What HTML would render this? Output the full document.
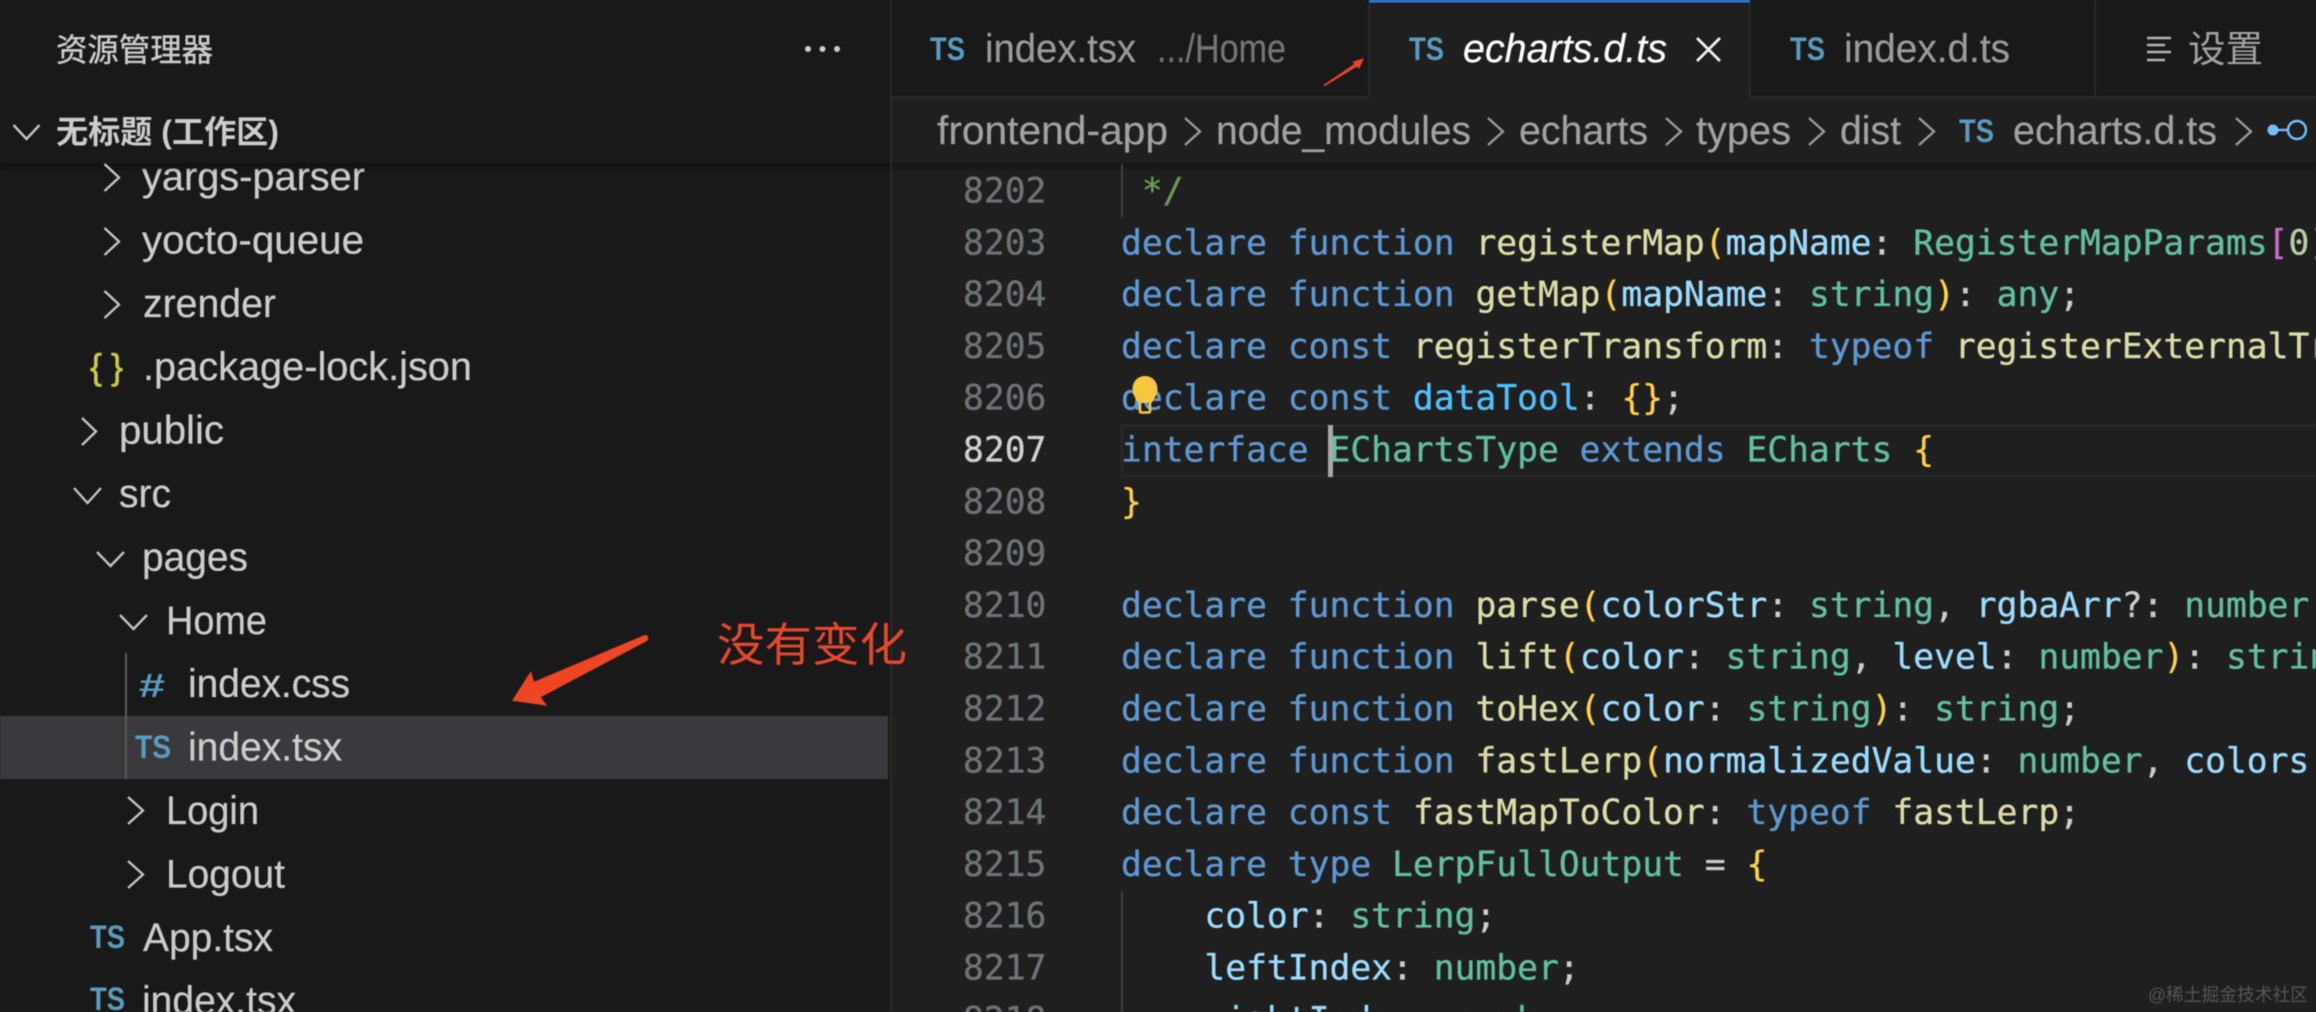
<!DOCTYPE html>
<html lang="zh-CN">
<head>
<meta charset="utf-8">
<title>echarts.d.ts</title>
<style>
html,body{margin:0;padding:0;background:#1f1f1f;width:2316px;height:1012px;overflow:hidden}
svg{display:block;filter:blur(.5px)}
text{white-space:pre}
.s{font:39.5px "Liberation Sans","Noto Sans CJK SC",sans-serif;fill:#cccccc;stroke:#cccccc;stroke-width:.25}
.ts{font:bold 32px "Liberation Sans",sans-serif;fill:#5b9bbd}
.tab{font:39.5px "Liberation Sans",sans-serif;fill:#9b9b9b;stroke:#9b9b9b;stroke-width:.2}
.bc{font:39.5px "Liberation Sans",sans-serif;fill:#a2a2a2;stroke:#a2a2a2;stroke-width:.2}
.c{font:34.63px "DejaVu Sans Mono",monospace;fill:#cccccc;stroke:#cccccc;stroke-width:.35}
.n{font:34.63px "DejaVu Sans Mono",monospace;fill:#6e7378;stroke:#6e7378;stroke-width:.35}
.k{fill:#5f98d2;stroke:#5f98d2}.f{fill:#dcdcaa;stroke:#dcdcaa}.v{fill:#9cdcfe;stroke:#9cdcfe}.t{fill:#63bfa3;stroke:#63bfa3}.y{fill:#ffd23f;stroke:#ffd23f}.p{fill:#c76fc9;stroke:#c76fc9}.m{fill:#b5cea8;stroke:#b5cea8}.g{fill:#6a9955;stroke:#6a9955}.d{fill:#4fc1ff;stroke:#4fc1ff}
.ch{fill:none;stroke:#c4c4c4;stroke-width:2.4}
.bch{fill:none;stroke:#9a9a9a;stroke-width:2.4}
</style>
</head>
<body>
<svg xmlns="http://www.w3.org/2000/svg" width="2316" height="1012" viewBox="0 0 2316 1012">
<defs>
<linearGradient id="sh" x1="0" y1="0" x2="0" y2="1"><stop offset="0" stop-color="#000" stop-opacity=".38"/><stop offset="1" stop-color="#000" stop-opacity="0"/></linearGradient>
</defs>

<!-- backgrounds -->
<rect x="0" y="0" width="2316" height="1012" fill="#1f1f1f"/>
<rect x="0" y="0" width="890" height="1012" fill="#19191a"/>
<rect x="890" y="0" width="2" height="1012" fill="#2a2a2a"/>
<rect x="892" y="0" width="1424" height="97" fill="#19191a"/>
<rect x="892" y="96" width="1424" height="3" fill="#292929"/>
<rect x="1369" y="0" width="381" height="99" fill="#1f1f1f"/>
<rect x="1369" y="0" width="381" height="2.500" fill="#2f7fd6"/>
<rect x="1368" y="3" width="2" height="93" fill="#2a2a2a"/>
<rect x="1749" y="3" width="2" height="93" fill="#2a2a2a"/>
<rect x="2094" y="0" width="2" height="97" fill="#2a2a2a"/>

<!-- sidebar -->
<rect x="0" y="716" width="888" height="63" fill="#3a3a3e"/>
<rect x="125" y="653" width="2" height="126" fill="#5a5a5a"/>

<g>
<text x="142" y="190" class="s" textLength="223" lengthAdjust="spacingAndGlyphs">yargs-parser</text>
<text x="142" y="253.4" class="s" textLength="222" lengthAdjust="spacingAndGlyphs">yocto-queue</text>
<text x="143" y="316.8" class="s" textLength="133" lengthAdjust="spacingAndGlyphs">zrender</text>
<text x="143" y="380.2" class="s" textLength="329" lengthAdjust="spacingAndGlyphs">.package-lock.json</text>
<text x="119" y="443.6" class="s" textLength="105" lengthAdjust="spacingAndGlyphs">public</text>
<text x="119" y="507" class="s" textLength="52" lengthAdjust="spacingAndGlyphs">src</text>
<text x="142" y="570.4" class="s" textLength="106" lengthAdjust="spacingAndGlyphs">pages</text>
<text x="166" y="633.8" class="s" textLength="101" lengthAdjust="spacingAndGlyphs">Home</text>
<text x="188" y="697.2" class="s" textLength="162" lengthAdjust="spacingAndGlyphs">index.css</text>
<text x="188" y="760.6" class="s" textLength="154" lengthAdjust="spacingAndGlyphs">index.tsx</text>
<text x="166" y="824" class="s" textLength="93" lengthAdjust="spacingAndGlyphs">Login</text>
<text x="166" y="887.4" class="s" textLength="119" lengthAdjust="spacingAndGlyphs">Logout</text>
<text x="143" y="950.8" class="s" textLength="130" lengthAdjust="spacingAndGlyphs">App.tsx</text>
<text x="142" y="1014.2" class="s" textLength="154" lengthAdjust="spacingAndGlyphs">index.tsx</text>
</g>

<!-- sticky workspace header -->
<rect x="0" y="0" width="890" height="163" fill="#19191a"/>
<rect x="0" y="163" width="890" height="10" fill="url(#sh)"/>
<text x="56" y="61" textLength="157" lengthAdjust="spacingAndGlyphs" style="font:32px 'Liberation Sans','Noto Sans CJK SC',sans-serif;fill:#cccccc;stroke:#cccccc;stroke-width:.4">资源管理器</text>
<circle cx="808" cy="49" r="3" fill="#cccccc"/><circle cx="822.500" cy="49" r="3" fill="#cccccc"/><circle cx="837" cy="49" r="3" fill="#cccccc"/>
<text x="56" y="143" textLength="223" lengthAdjust="spacingAndGlyphs" style="font:bold 32px 'Liberation Sans','Noto Sans CJK SC',sans-serif;fill:#cccccc">无标题 (工作区)</text>
<path class="ch" d="M13.500 125 L26.500 139 L39.500 125"/>

<!-- tree chevrons -->
<path class="ch" d="M104.500 164 L119 177.500 L104.500 191"/>
<path class="ch" d="M104.500 228 L119 241.500 L104.500 255"/>
<path class="ch" d="M104.500 291 L119 304.500 L104.500 318"/>
<path class="ch" d="M82 418 L96 431.500 L82 445"/>
<path class="ch" d="M74 488 L87.500 503 L101 488"/>
<path class="ch" d="M97 552 L110.500 566 L124 552"/>
<path class="ch" d="M120 615 L133.500 629 L147 615"/>
<path class="ch" d="M128 797 L143 810.500 L128 824"/>
<path class="ch" d="M128 861 L143 874.500 L128 888"/>

<!-- file icons -->
<text x="90" y="379" textLength="33" lengthAdjust="spacing" style="font:36px 'Liberation Sans',sans-serif;fill:#cbcb41;stroke:#cbcb41;stroke-width:.6">{}</text>
<text x="139" y="697" textLength="26" lengthAdjust="spacingAndGlyphs" style="font:bold 33px 'Liberation Sans',sans-serif;fill:#5b9bbd">#</text>
<text x="135" y="758" class="ts" textLength="36" lengthAdjust="spacingAndGlyphs">TS</text>
<text x="90" y="948" class="ts" textLength="35" lengthAdjust="spacingAndGlyphs">TS</text>
<text x="90" y="1010" class="ts" textLength="35" lengthAdjust="spacingAndGlyphs">TS</text>

<!-- annotation -->
<text x="717" y="661" textLength="190" lengthAdjust="spacingAndGlyphs" style="font:46px 'Liberation Sans','Noto Sans CJK SC',sans-serif;fill:#e8472c">没有变化</text>
<path fill="#ee4523" d="M512 700.700 L531 671 L534 681.700 L643.500 635.500 Q647 634 648 637 Q649 640 646 641.500 L540.700 697.300 L547.300 705.700 Z"/>

<!-- tabs -->
<text x="930" y="60" class="ts" textLength="35" lengthAdjust="spacingAndGlyphs">TS</text>
<text x="985" y="62" class="tab" textLength="151" lengthAdjust="spacingAndGlyphs">index.tsx</text>
<text x="1157" y="62" class="tab" style="fill:#757575;stroke:#757575" textLength="129" lengthAdjust="spacingAndGlyphs">.../Home</text>
<path fill="#ee4523" d="M1364 58.300 L1352.300 61.700 L1354.300 64 L1323.500 85 L1324.500 86.300 L1357 66.500 L1359 69 Z"/>

<text x="1409" y="60" class="ts" textLength="35" lengthAdjust="spacingAndGlyphs">TS</text>
<text x="1463" y="62" class="tab" style="fill:#ffffff;stroke:#ffffff;font-style:italic" textLength="204" lengthAdjust="spacingAndGlyphs">echarts.d.ts</text>
<path d="M1697 38 L1720 61 M1720 38 L1697 61" fill="none" stroke="#f0f0f0" stroke-width="2.800"/>

<text x="1790" y="60" class="ts" textLength="35" lengthAdjust="spacingAndGlyphs">TS</text>
<text x="1844" y="62" class="tab" textLength="166" lengthAdjust="spacingAndGlyphs">index.d.ts</text>

<path d="M2147 38 H2171 M2147 45 H2165 M2147 52 H2171 M2147 60 H2165" fill="none" stroke="#b4b4b4" stroke-width="2.600"/>
<text x="2188" y="62" textLength="75" lengthAdjust="spacingAndGlyphs" style="font:37px 'Liberation Sans','Noto Sans CJK SC',sans-serif;fill:#a2a2a2">设置</text>

<!-- breadcrumb -->
<text x="937" y="144" class="bc" textLength="231" lengthAdjust="spacingAndGlyphs">frontend-app</text>
<path class="bch" d="M1185 118 L1200 131.500 L1185 145"/>
<text x="1216" y="144" class="bc" textLength="255" lengthAdjust="spacingAndGlyphs">node_modules</text>
<path class="bch" d="M1488 118 L1503 131.500 L1488 145"/>
<text x="1519" y="144" class="bc" textLength="129" lengthAdjust="spacingAndGlyphs">echarts</text>
<path class="bch" d="M1666 118 L1681 131.500 L1666 145"/>
<text x="1696" y="144" class="bc" textLength="95" lengthAdjust="spacingAndGlyphs">types</text>
<path class="bch" d="M1809 118 L1824 131.500 L1809 145"/>
<text x="1840" y="144" class="bc" textLength="61" lengthAdjust="spacingAndGlyphs">dist</text>
<path class="bch" d="M1919 118 L1934 131.500 L1919 145"/>
<text x="1959" y="142" class="ts" textLength="35" lengthAdjust="spacingAndGlyphs">TS</text>
<text x="2013" y="144" class="bc" textLength="204" lengthAdjust="spacingAndGlyphs">echarts.d.ts</text>
<path class="bch" d="M2236 118 L2251 131.500 L2236 145"/>
<circle cx="2273" cy="130" r="5.500" fill="#75beff"/>
<path d="M2278 130 H2288" stroke="#75beff" stroke-width="2.400"/>
<ellipse cx="2297" cy="130" rx="9" ry="9" fill="none" stroke="#75beff" stroke-width="2.400"/>
<rect x="892" y="163" width="1424" height="10" fill="url(#sh)"/>

<!-- current line -->
<rect x="1121.500" y="426" width="1200" height="50" fill="none" stroke="#272727" stroke-width="3"/>

<!-- indent guides -->
<rect x="1121" y="164" width="2" height="53" fill="#404040"/>
<rect x="1121" y="892" width="2" height="120" fill="#404040"/>

<!-- line numbers -->
<g transform="translate(0,-.7)">
<text x="963" y="203.200" class="n">8202</text>
<text x="963" y="255" class="n">8203</text>
<text x="963" y="306.800" class="n">8204</text>
<text x="963" y="358.600" class="n">8205</text>
<text x="963" y="410.400" class="n">8206</text>
<text x="963" y="462.200" class="n" style="fill:#d0d0d0;stroke:#d0d0d0">8207</text>
<text x="963" y="514" class="n">8208</text>
<text x="963" y="565.800" class="n">8209</text>
<text x="963" y="617.600" class="n">8210</text>
<text x="963" y="669.400" class="n">8211</text>
<text x="963" y="721.200" class="n">8212</text>
<text x="963" y="773" class="n">8213</text>
<text x="963" y="824.800" class="n">8214</text>
<text x="963" y="876.600" class="n">8215</text>
<text x="963" y="928.400" class="n">8216</text>
<text x="963" y="980.200" class="n">8217</text>
<text x="963" y="1032" class="n">8218</text>

<!-- code -->
<text x="1121" y="203.200" class="c"> <tspan class="g">*/</tspan></text>
<text x="1121" y="255" class="c"><tspan class="k">declare</tspan> <tspan class="k">function</tspan> <tspan class="f">registerMap</tspan><tspan class="y">(</tspan><tspan class="v">mapName</tspan>: <tspan class="t">RegisterMapParams</tspan><tspan class="p">[</tspan><tspan class="m">0</tspan><tspan class="p">]</tspan></text>
<text x="1121" y="306.800" class="c"><tspan class="k">declare</tspan> <tspan class="k">function</tspan> <tspan class="f">getMap</tspan><tspan class="y">(</tspan><tspan class="v">mapName</tspan>: <tspan class="t">string</tspan><tspan class="y">)</tspan>: <tspan class="t">any</tspan>;</text>
<text x="1121" y="358.600" class="c"><tspan class="k">declare</tspan> <tspan class="k">const</tspan> <tspan class="f">registerTransform</tspan>: <tspan class="k">typeof</tspan> <tspan class="f">registerExternalTransform</tspan>;</text>
<text x="1121" y="410.400" class="c"><tspan class="k">declare</tspan> <tspan class="k">const</tspan> <tspan class="d">dataTool</tspan>: <tspan class="y">{}</tspan>;</text>
<text x="1121" y="462.200" class="c"><tspan class="k">interface</tspan> <tspan class="t">EChartsType</tspan> <tspan class="k">extends</tspan> <tspan class="t">ECharts</tspan> <tspan class="y">{</tspan></text>
<text x="1121" y="514" class="c"><tspan class="y">}</tspan></text>
<text x="1121" y="617.600" class="c"><tspan class="k">declare</tspan> <tspan class="k">function</tspan> <tspan class="f">parse</tspan><tspan class="y">(</tspan><tspan class="v">colorStr</tspan>: <tspan class="t">string</tspan>, <tspan class="v">rgbaArr</tspan>?: <tspan class="t">number</tspan></text>
<text x="1121" y="669.400" class="c"><tspan class="k">declare</tspan> <tspan class="k">function</tspan> <tspan class="f">lift</tspan><tspan class="y">(</tspan><tspan class="v">color</tspan>: <tspan class="t">string</tspan>, <tspan class="v">level</tspan>: <tspan class="t">number</tspan><tspan class="y">)</tspan>: <tspan class="t">string</tspan>;</text>
<text x="1121" y="721.200" class="c"><tspan class="k">declare</tspan> <tspan class="k">function</tspan> <tspan class="f">toHex</tspan><tspan class="y">(</tspan><tspan class="v">color</tspan>: <tspan class="t">string</tspan><tspan class="y">)</tspan>: <tspan class="t">string</tspan>;</text>
<text x="1121" y="773" class="c"><tspan class="k">declare</tspan> <tspan class="k">function</tspan> <tspan class="f">fastLerp</tspan><tspan class="y">(</tspan><tspan class="v">normalizedValue</tspan>: <tspan class="t">number</tspan>, <tspan class="v">colors</tspan>: <tspan class="t">string</tspan></text>
<text x="1121" y="824.800" class="c"><tspan class="k">declare</tspan> <tspan class="k">const</tspan> <tspan class="f">fastMapToColor</tspan>: <tspan class="k">typeof</tspan> <tspan class="f">fastLerp</tspan>;</text>
<text x="1121" y="876.600" class="c"><tspan class="k">declare</tspan> <tspan class="k">type</tspan> <tspan class="t">LerpFullOutput</tspan> = <tspan class="y">{</tspan></text>
<text x="1121" y="928.400" class="c">    <tspan class="v">color</tspan>: <tspan class="t">string</tspan>;</text>
<text x="1121" y="980.200" class="c">    <tspan class="v">leftIndex</tspan>: <tspan class="t">number</tspan>;</text>
<text x="1121" y="1032" class="c">    <tspan class="v">rightIndex</tspan>: <tspan class="t">number</tspan>;</text>
</g>

<!-- cursor -->
<rect x="1328" y="425" width="5" height="52" fill="#a9a9a9"/>

<!-- lightbulb -->
<path fill="#f6c83f" d="M1145 376 C1137 376 1132.500 382.500 1132.500 389 C1132.500 395 1136 399 1138.500 403 L1151.500 403 C1154 399 1157.500 395 1157.500 389 C1157.500 382.500 1153 376 1145 376 Z"/>
<path d="M1140 402 V411 Q1140 412.500 1141.500 412.500 H1148.500 Q1150 412.500 1150 411 V402" fill="none" stroke="#f6c83f" stroke-width="2.600"/>

<!-- watermark -->
<text x="2148" y="1001" textLength="160" lengthAdjust="spacingAndGlyphs" style="font:18px 'Liberation Sans','Noto Sans CJK SC',sans-serif;fill:#565656">@稀土掘金技术社区</text>
</svg>
</body>
</html>
